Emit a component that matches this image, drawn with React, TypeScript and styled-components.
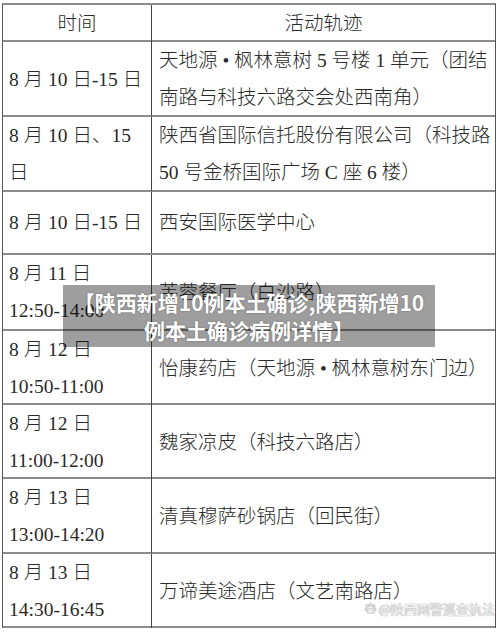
import React from "react";
import styled, { createGlobalStyle } from "styled-components";

const Global = createGlobalStyle`
  html, body { margin: 0; padding: 0; background: #fff; }
  body { width: 500px; height: 633px; overflow: hidden; }
`;

const Page = styled.div`
  position: relative;
  width: 500px;
  height: 633px;
  padding: 3px 0 0 2px;
  box-sizing: border-box;
  background: #fff;
  font-family: "Liberation Serif", "Noto Sans CJK SC", serif;
  font-weight: 300;
  color: #2a2a2a;
  font-size: 19.5px;
`;

const Table = styled.div`
  width: 494px;
  box-sizing: border-box;
  border-top: 2px solid #8c8c8c;
  border-left: 1px solid #555;
  border-right: 1px solid #555;
`;

const Row = styled.div<{ $h: number }>`
  display: grid;
  grid-template-columns: 149px 1fr;
  height: ${(p) => p.$h}px;
  box-sizing: border-box;
  border-bottom: 2px solid #8c8c8c;
`;

const HeadCell = styled.div`
  display: flex;
  align-items: center;
  justify-content: center;
  line-height: 37px;
  &:first-child { border-right: 1px solid #444; }
`;

const DateCell = styled.div`
  display: flex;
  flex-direction: column;
  justify-content: center;
  padding-left: 6px;
  border-right: 1px solid #444;
  line-height: 37px;
`;

const PlaceCell = styled.div`
  display: flex;
  flex-direction: column;
  justify-content: center;
  padding-left: 7px;
  line-height: 37px;
`;

const Line = styled.div`
  white-space: nowrap;
`;

const Banner = styled.div`
  position: absolute;
  left: 63px;
  top: 285px;
  width: 372px;
  height: 62px;
  box-sizing: border-box;
  padding-top: 3px;
  background: rgba(0, 0, 0, 0.38);
  color: #fff;
  font-family: "Noto Sans CJK SC", sans-serif;
  font-weight: 700;
  font-size: 21px;
  line-height: 28px;
  text-align: center;
  white-space: nowrap;
  text-shadow: 0 0 2px rgba(0, 0, 0, 0.35);
`;

const Watermark = styled.div`
  position: absolute;
  right: 5px;
  top: 599px;
  display: flex;
  align-items: center;
  gap: 2px;
  font-family: "Noto Sans CJK SC", sans-serif;
  font-size: 13px;
  font-weight: 400;
  color: #f4f4f4;
  text-shadow: 0 0 1px #999, 0 0 1px #999;
`;

const Paw = () => (
  <svg width="13" height="13" viewBox="0 0 16 16">
    <g fill="#eee" stroke="#aaa" strokeWidth="0.8">
      <ellipse cx="4" cy="5" rx="1.6" ry="2" />
      <ellipse cx="8" cy="3.5" rx="1.6" ry="2" />
      <ellipse cx="12" cy="5" rx="1.6" ry="2" />
      <ellipse cx="2.5" cy="9" rx="1.4" ry="1.7" />
      <ellipse cx="13.5" cy="9" rx="1.4" ry="1.7" />
      <path d="M8 7.5c-2.5 0-4.5 3-4.5 4.8 0 1.5 1.3 2 2.3 1.7 1-.3 1.5-.6 2.2-.6s1.2.3 2.2.6c1 .3 2.3-.2 2.3-1.7C12.5 10.5 10.5 7.5 8 7.5z" />
    </g>
  </svg>
);

type Rec = { h: number; date: string[]; place: string[] };

const rows: Rec[] = [
  { h: 75, date: ["8 月 10 日-15 日"], place: ["天地源 • 枫林意树 5 号楼 1 单元（团结", "南路与科技六路交会处西南角）"] },
  { h: 75, date: ["8 月 10 日、15", "日"], place: ["陕西省国际信托股份有限公司（科技路", "50 号金桥国际广场 C 座 6 楼）"] },
  { h: 63, date: ["8 月 10 日-15 日"], place: ["西安国际医学中心"] },
  { h: 76, date: ["8 月 11 日", "12:50-14:00"], place: ["芙蓉餐厅（白沙路）"] },
  { h: 74, date: ["8 月 12 日", "10:50-11:00"], place: ["怡康药店（天地源 • 枫林意树东门边）"] },
  { h: 74, date: ["8 月 12 日", "11:00-12:00"], place: ["魏家凉皮（科技六路店）"] },
  { h: 75, date: ["8 月 13 日", "13:00-14:20"], place: ["清真穆萨砂锅店（回民街）"] },
  { h: 74, date: ["8 月 13 日", "14:30-16:45"], place: ["万谛美途酒店（文艺南路店）"] },
];

export default function App() {
  return (
    <>
      <Global />
      <Page>
        <Table>
          <Row $h={37}>
            <HeadCell>时间</HeadCell>
            <HeadCell>活动轨迹</HeadCell>
          </Row>
          {rows.map((r, i) => (
            <Row key={i} $h={r.h}>
              <DateCell>
                {r.date.map((d, j) => (
                  <Line key={j}>{d}</Line>
                ))}
              </DateCell>
              <PlaceCell>
                {r.place.map((d, j) => (
                  <Line key={j}>{d}</Line>
                ))}
              </PlaceCell>
            </Row>
          ))}
        </Table>
        <Banner>
          <div>【陕西新增10例本土确诊,陕西新增10</div>
          <div>例本土确诊病例详情】</div>
        </Banner>
        <Watermark>
          <Paw />
          <span>@陕西网警巡查执法</span>
        </Watermark>
      </Page>
    </>
  );
}
